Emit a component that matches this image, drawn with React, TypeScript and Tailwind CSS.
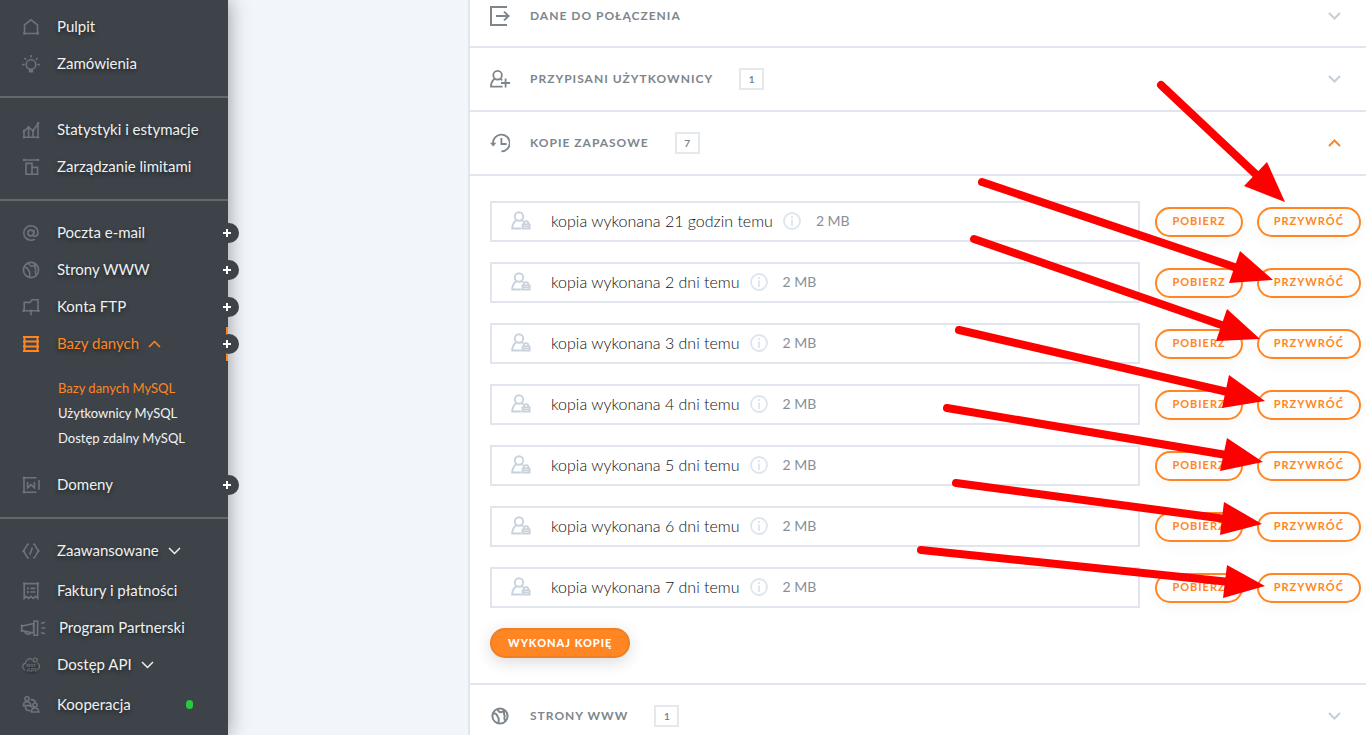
import { useState } from "react";
import type { ReactNode } from "react";
import { clsx } from "clsx";

type NavItem = {
  label: string;
  icon: ReactNode;
  add?: boolean;
  chevron?: "up" | "down";
  active?: boolean;
  dot?: boolean;
  wide?: boolean;
  children?: { label: string; active?: boolean }[];
};

type SectionProps = {
  title: string;
  icon: ReactNode;
  count?: number;
  open?: boolean;
  first?: boolean;
  onToggle?: () => void;
  children?: ReactNode;
};

function Svg({ children, size = 18, width }: { children: ReactNode; size?: number; width?: number }) {
  const w = width ?? size;
  return (
    <svg
      width={w}
      height={size}
      viewBox={`0 0 ${w} ${size}`}
      fill="none"
      stroke="currentColor"
      strokeWidth="1.6"
      className="shrink-0"
      aria-hidden="true"
    >
      {children}
    </svg>
  );
}

const homeIcon = (
  <Svg>
    <path d="M2.500 15.500V7L9 1.800 15.500 7v8.500z" />
    <path d="M1.500 14.500h1.600v1.800H1.500zM14.900 14.500h1.600v1.800h-1.600z" fill="currentColor" strokeWidth=".6" />
  </Svg>
);

const bulbIcon = (
  <Svg>
    <circle cx="9" cy="9.600" r="4.800" />
    <path d="M7.600 15v1.600h2.800V15" fill="currentColor" />
    <path d="M9 0v2.600M.2 9.600h2.400M15.400 9.600h2.400M2.400 3l1.700 1.700M15.600 3l-1.700 1.700" />
  </Svg>
);

const statsIcon = (
  <Svg>
    <path d="M2 16.300V10l4.600-3.600L11 9.600l5-6.600v13.300zM6.600 6.800v9.400M11 10v6.200" />
    <g fill="currentColor" stroke="none">
      <circle cx="2" cy="10" r="1.300" />
      <circle cx="6.600" cy="6.200" r="1.300" />
      <circle cx="11" cy="9.600" r="1.300" />
      <circle cx="16" cy="2.400" r="1.400" />
      <circle cx="2" cy="16.200" r="1.200" />
      <circle cx="16" cy="16.200" r="1.200" />
    </g>
  </Svg>
);

const limitsIcon = (
  <Svg>
    <path d="M2 2h14M4 5.400h6v10.900H4zM10 9.400h5.600v6.900H10z" />
    <circle cx="2" cy="2" r="1.300" fill="currentColor" stroke="none" />
    <circle cx="16" cy="2" r="1.300" fill="currentColor" stroke="none" />
  </Svg>
);

const atIcon = (
  <Svg>
    <circle cx="8.800" cy="9" r="2.900" />
    <path d="M12.200 5.800 11.400 11c-.1 2.200 4.600 1.700 4.600-2.400C16 4.600 13 1.800 9 1.800S1.800 4.900 1.800 9s3 7.200 7.200 7.200c1.600 0 2.600-.3 3.800-1.100" />
  </Svg>
);

function GlobeIcon({ heavy }: { heavy?: boolean }) {
  return (
    <Svg>
      <g strokeWidth={heavy ? 2 : 1.6}>
        <circle cx="9" cy="9" r="7.600" />
        <path d="M2.200 6.200c2.600-.2 3.600 1 4.200 2.800.4 1.400 1.600 1.600 1.400 3.400-.1 1.400-.4 2.400-.4 3.800M6.600 2c.2 1.600.8 2.600 2.600 3.200l4-.6c.2 1.400-1 2.600.4 3.600.6 1-.6 2-.2 3.400l1 2.200M11.800 2.200l1.400 2.400" />
      </g>
    </Svg>
  );
}

const ftpIcon = (
  <Svg>
    <path d="M2.200 12.800V4.400h6l1.800-2.600h6v11M.4 12.800h17.200M9 12.800v4.400" />
    <circle cx="9" cy="12.800" r="1.300" fill="currentColor" stroke="none" />
    <circle cx="1.800" cy="12.800" r="1.300" fill="currentColor" stroke="none" />
    <circle cx="16.200" cy="12.800" r="1.300" fill="currentColor" stroke="none" />
  </Svg>
);

const databaseIcon = (
  <Svg>
    <path d="M2.500 1v16M15.500 1v16M1 2h16M1 6.500h16M1 11.500h16M1 16h16" strokeWidth="2" />
  </Svg>
);

const domainIcon = (
  <Svg>
    <path d="M14.500 1.800H2v14.400h12.500M17 4v9.800M5.600 6v5.800L9 8.600l3.400 3.200V6" />
    <circle cx="2" cy="1.800" r="1.300" fill="currentColor" stroke="none" />
    <circle cx="2" cy="16.200" r="1.300" fill="currentColor" stroke="none" />
  </Svg>
);

const codeIcon = (
  <Svg>
    <path d="M7 2.200H5.600L1.600 9l4 6.800H7M11 2.200h1.400L16.400 9l-4 6.800H11M10.400 5.600l-2.600 7" />
    <circle cx="1.600" cy="9" r="1.300" fill="currentColor" stroke="none" />
    <circle cx="16.400" cy="9" r="1.300" fill="currentColor" stroke="none" />
  </Svg>
);

const invoiceIcon = (
  <Svg>
    <path d="M2.200 1.600v14.800l2.200-2 2.300 2 2.300-2 2.300 2 2.300-2 2.200 2V1.600zM8.400 6.400h5M8.400 10h5" />
    <path d="M5 5.200h1.800v2.200H5zM5 9h1.800v2.200H5z" fill="currentColor" stroke="none" />
    <circle cx="2.200" cy="1.600" r="1.300" fill="currentColor" stroke="none" />
    <circle cx="15.800" cy="1.600" r="1.300" fill="currentColor" stroke="none" />
  </Svg>
);

const partnerIcon = (
  <Svg width={26}>
    <path d="M1.800 7.200v4.400L13.600 14V4.400zM14 2h3.600v14.200H14zM4.800 12.400c.6 3.400 5.200 3.600 6 1.400M21 4.600l3.800-1.400M21.400 9h4M21 13.400l3.800 1.400" />
    <circle cx="1.800" cy="6.800" r="1.300" fill="currentColor" stroke="none" />
    <circle cx="1.800" cy="11.800" r="1.300" fill="currentColor" stroke="none" />
  </Svg>
);

const apiIcon = (
  <Svg>
    <path d="M3.200 14.200C-.6 12.600.4 7.600 3.400 7.400 3.600 3.600 7.600 1.600 10.200 3.400M15.400 7c3 1.400 2.600 6-.6 7.200" strokeWidth="1.200" />
    <circle cx="13.200" cy="4" r="2" strokeWidth="1.200" />
    <text x="4.200" y="10.800" fontSize="4" fontWeight="700" fill="currentColor" stroke="none">REST</text>
    <text x="4.600" y="16.200" fontSize="6" fontWeight="700" fill="currentColor" stroke="none">API</text>
  </Svg>
);

const cooperationIcon = (
  <Svg>
    <circle cx="5" cy="2.800" r="2" />
    <path d="M1.400 9.600C1.400 7 3 5.800 5 5.800s3.400 1 3.600 3.800z" />
    <circle cx="13" cy="9" r="2" />
    <path d="M9.400 16C9.400 13.200 11 12 13 12s3.600 1.200 3.800 4z" />
    <path d="M8.600 3.600c3-.2 4.400.8 4.800 2.800M3.400 10.400c-.2 3.200 2 4.600 5 4.400M8.600 9.600l2 2.200" />
  </Svg>
);

const exitIcon = (
  <Svg size={20}>
    <path d="M17 1H1v18h16M6 10h12.500M14 5.600l4.600 4.400-4.600 4.400" strokeWidth="2" />
  </Svg>
);

const addUserIcon = (
  <Svg size={20}>
    <g strokeWidth="1.800">
      <circle cx="7.600" cy="6.200" r="4.300" />
      <path d="M4.800 9.800C2.400 11.400 1 14.400 1 17.600h11.600M10.400 9.800l1.800 1.600M15.600 9.400v9.200M11 14h9" />
    </g>
  </Svg>
);

const historyIcon = (
  <Svg size={20}>
    <path d="M3 10.800A8.400 8.400 0 1 1 11.400 18.400M11.400 5v6h5.200" strokeWidth="1.800" />
    <path d="M0 9.800h6.400l-3.200 3.600z" fill="currentColor" stroke="none" />
  </Svg>
);

const backupIcon = (
  <Svg size={20}>
    <g strokeWidth="1.900">
      <circle cx="8" cy="5.500" r="4.200" />
      <path d="M5.200 9.200C2.800 11 1.200 14 1.200 17.500h9.200M10.800 9.200l1.400 1.200M13 13v-1.200c0-2.200 4.200-2.200 4.200 0V13" />
      <path d="M11.600 13.500h7v4h-7z" />
      <path d="M12 15.500h6" strokeWidth="1" />
    </g>
  </Svg>
);

function Chevron({ up, thin }: { up?: boolean; thin?: boolean }) {
  return (
    <svg
      width="13"
      height="8"
      viewBox="0 0 13 8"
      fill="none"
      stroke="currentColor"
      strokeWidth={thin ? 1.5 : 2}
      aria-hidden="true"
    >
      <path d={up ? "M1 7l5.500-5.500L12 7" : "M1 1l5.500 5.500L12 1"} />
    </svg>
  );
}

const navGroups: NavItem[][] = [
  [
    { label: "Pulpit", icon: homeIcon },
    { label: "Zamówienia", icon: bulbIcon },
  ],
  [
    { label: "Statystyki i estymacje", icon: statsIcon },
    { label: "Zarządzanie limitami", icon: limitsIcon },
  ],
  [
    { label: "Poczta e-mail", icon: atIcon, add: true },
    { label: "Strony WWW", icon: <GlobeIcon />, add: true },
    { label: "Konta FTP", icon: ftpIcon, add: true },
    {
      label: "Bazy danych",
      icon: databaseIcon,
      add: true,
      chevron: "up",
      active: true,
      children: [
        { label: "Bazy danych MySQL", active: true },
        { label: "Użytkownicy MySQL" },
        { label: "Dostęp zdalny MySQL" },
      ],
    },
    { label: "Domeny", icon: domainIcon, add: true },
  ],
  [
    { label: "Zaawansowane", icon: codeIcon, chevron: "down" },
    { label: "Faktury i płatności", icon: invoiceIcon },
    { label: "Program Partnerski", icon: partnerIcon, wide: true },
    { label: "Dostęp API", icon: apiIcon, chevron: "down" },
    { label: "Kooperacja", icon: cooperationIcon, dot: true },
  ],
];

const backups = ["21 godzin", "2 dni", "3 dni", "4 dni", "5 dni", "6 dni", "7 dni"];

// start point, arrow head corners and tip
const arrows = [
  { from: [1161, 85], a: [1267, 162], b: [1244, 186], tip: [1285, 202] },
  { from: [982, 182], a: [1240, 251], b: [1229, 283], tip: [1273, 280] },
  { from: [974, 239], a: [1227, 309], b: [1216, 341], tip: [1260, 339] },
  { from: [959, 330], a: [1229, 375], b: [1222, 408], tip: [1265, 401] },
  { from: [947, 408], a: [1227, 438], b: [1220, 471], tip: [1263, 462] },
  { from: [956, 483], a: [1224, 502], b: [1220, 535], tip: [1262, 524] },
  { from: [921, 550], a: [1227, 565], b: [1223, 598], tip: [1265, 586] },
];

function NavEntry({ item }: { item: NavItem }) {
  return (
    <li className={clsx(item.chevron === "down" && "mb-[3px]")}>
      <div className="relative flex h-[37px] items-center">
        <a
          href="#"
          className={clsx(
            "flex items-center [text-shadow:0_2px_4px_rgba(0,0,0,0.5)]",
            item.wide ? "gap-[13px] pl-5" : "gap-[17px] pl-[22px]",
            item.active ? "text-[#ff8623]" : "text-[#eef0f1]"
          )}
        >
          <span className={item.active ? "text-[#ff8623]" : "text-[#6c757b]"}>{item.icon}</span>
          {item.label}
          {item.chevron && (
            <span className="-ml-2">
              <Chevron thin up={item.chevron === "up"} />
            </span>
          )}
        </a>
        {item.dot && <span className="mr-[35px] ml-auto h-[9px] w-[7px] rounded-full bg-[#27c93f]" />}
        {item.active && <span className="absolute right-0 h-[34px] w-0.5 bg-[#ff8623]" />}
        {item.add && (
          <button
            type="button"
            aria-label={`Dodaj: ${item.label}`}
            className="absolute -right-[11px] flex size-5 items-center rounded-full bg-[#3d4348] pl-1 text-white"
          >
            <svg width="8" height="8" viewBox="0 0 8 8" stroke="currentColor" strokeWidth="2" aria-hidden="true">
              <path d="M4 0v8M0 4h8" />
            </svg>
          </button>
        )}
      </div>
      {item.children && (
        <ul className="mt-[14px] mb-[15px] pl-[58px] text-[13px]">
          {item.children.map((child) => (
            <li key={child.label} className="flex h-[25px] items-center">
              <a href="#" className={child.active ? "text-[#ff8623]" : "text-[#f1f2f3]"}>
                {child.label}
              </a>
            </li>
          ))}
        </ul>
      )}
    </li>
  );
}

function Sidebar() {
  return (
    <nav className="relative z-10 w-[228px] shrink-0 bg-[#3d4348] text-[15px] shadow-[0_0_20px_rgba(0,0,0,0.4)]">
      {navGroups.map((group, i) => (
        <ul
          key={i}
          className={clsx("pb-[14px]", i === 0 ? "pt-2" : "border-t-2 border-[#626969] pt-[13px]")}
        >
          {group.map((item) => (
            <NavEntry key={item.label} item={item} />
          ))}
        </ul>
      ))}
    </nav>
  );
}

function Section({ title, icon, count, open, first, onToggle, children }: SectionProps) {
  return (
    <section className="border-b-2 border-[#e1e6ee]">
      <button
        type="button"
        onClick={onToggle}
        aria-expanded={!!open}
        className={clsx(
          "flex w-full items-center pr-[25px] pl-5 text-[#7d868c]",
          first ? "pt-[5px] pb-[19px]" : "py-5"
        )}
      >
        <span className="flex w-5 justify-center">{icon}</span>
        <span className="ml-5 text-[12px] leading-[22px] font-bold tracking-[1px]">{title}</span>
        {count !== undefined && (
          <span className="ml-[26px] flex h-[22px] w-[25px] items-center justify-center border-2 border-[#e6e9ec] text-[10px] font-bold">
            {count}
          </span>
        )}
        <span className={clsx("ml-auto", open ? "text-[#ff8623]" : "text-[#c5ced8]")}>
          <Chevron up={open} />
        </span>
      </button>
      {open && children}
    </section>
  );
}

function OutlineButton({ children }: { children: ReactNode }) {
  return (
    <button
      type="button"
      className="h-[30px] rounded-full border-2 border-[#ff8623] bg-[#fdfdfd] px-[15px] text-[11px] font-bold tracking-[1px] text-[#ff8623] shadow-[0_4px_16px_rgba(0,0,0,0.04)]"
    >
      {children}
    </button>
  );
}

function BackupRow({ age }: { age: string }) {
  return (
    <li className="flex items-center">
      <div className="flex h-[41px] flex-1 items-center border-2 border-[#e1e6ee] pb-0.5 pl-[19px]">
        <span className="text-[#c8d2dc]">{backupIcon}</span>
        <span className="ml-5 text-[16px] font-light text-[#111]">kopia wykonana {age} temu</span>
        <svg
          width="18"
          height="18"
          viewBox="0 0 18 18"
          fill="none"
          stroke="#dfe5ee"
          strokeWidth="1.800"
          className="ml-[10px]"
          aria-hidden="true"
        >
          <circle cx="9" cy="9" r="8" />
          <path d="M9 7.600V14M9 4v2" />
        </svg>
        <span className="ml-[15px] text-[14px] text-[#879097]">2 MB</span>
      </div>
      <div className="ml-[15px] flex gap-[14px]">
        <OutlineButton>POBIERZ</OutlineButton>
        <OutlineButton>PRZYWRÓĆ</OutlineButton>
      </div>
    </li>
  );
}

function Arrows() {
  return (
    <svg
      className="pointer-events-none absolute top-0 right-0 z-20 h-[735px] w-[460px]"
      viewBox="906 0 460 735"
      fill="#f00"
      aria-hidden="true"
    >
      {arrows.map(({ from, a, b, tip }) => (
        <g key={tip.join()}>
          <line
            x1={from[0]}
            y1={from[1]}
            x2={(a[0] + b[0]) / 2}
            y2={(a[1] + b[1]) / 2}
            stroke="#f00"
            strokeWidth="8"
            strokeLinecap="round"
          />
          <polygon points={`${a} ${b} ${tip}`} />
        </g>
      ))}
    </svg>
  );
}

export default function App() {
  const [open, setOpen] = useState(true);

  return (
    <div className="relative flex h-screen overflow-hidden bg-[#f2f5fa] font-['Lato',sans-serif]">
      <Sidebar />
      <main className="ml-60 flex-1 self-start border-l-2 border-[#e1e6ee] bg-white">
        <Section first title="DANE DO POŁĄCZENIA" icon={exitIcon} />
        <Section title="PRZYPISANI UŻYTKOWNICY" icon={addUserIcon} count={1} />
        <Section title="KOPIE ZAPASOWE" icon={historyIcon} count={7} open={open} onToggle={() => setOpen(!open)}>
          <div className="border-t-2 border-[#e1e6ee] py-[25px] pr-[5px] pl-5">
            <ul className="flex flex-col gap-5">
              {backups.map((age) => (
                <BackupRow key={age} age={age} />
              ))}
            </ul>
            <button
              type="button"
              className="mt-5 block h-[30px] rounded-full border-2 border-[#ee7f24] bg-[#ff8623] px-4 text-[11px] font-black tracking-[1px] text-white shadow-[0_4px_16px_rgba(0,0,0,0.15)]"
            >
              WYKONAJ KOPIĘ
            </button>
          </div>
        </Section>
        <Section title="STRONY WWW" icon={<GlobeIcon heavy />} count={1} />
      </main>
      <Arrows />
    </div>
  );
}
